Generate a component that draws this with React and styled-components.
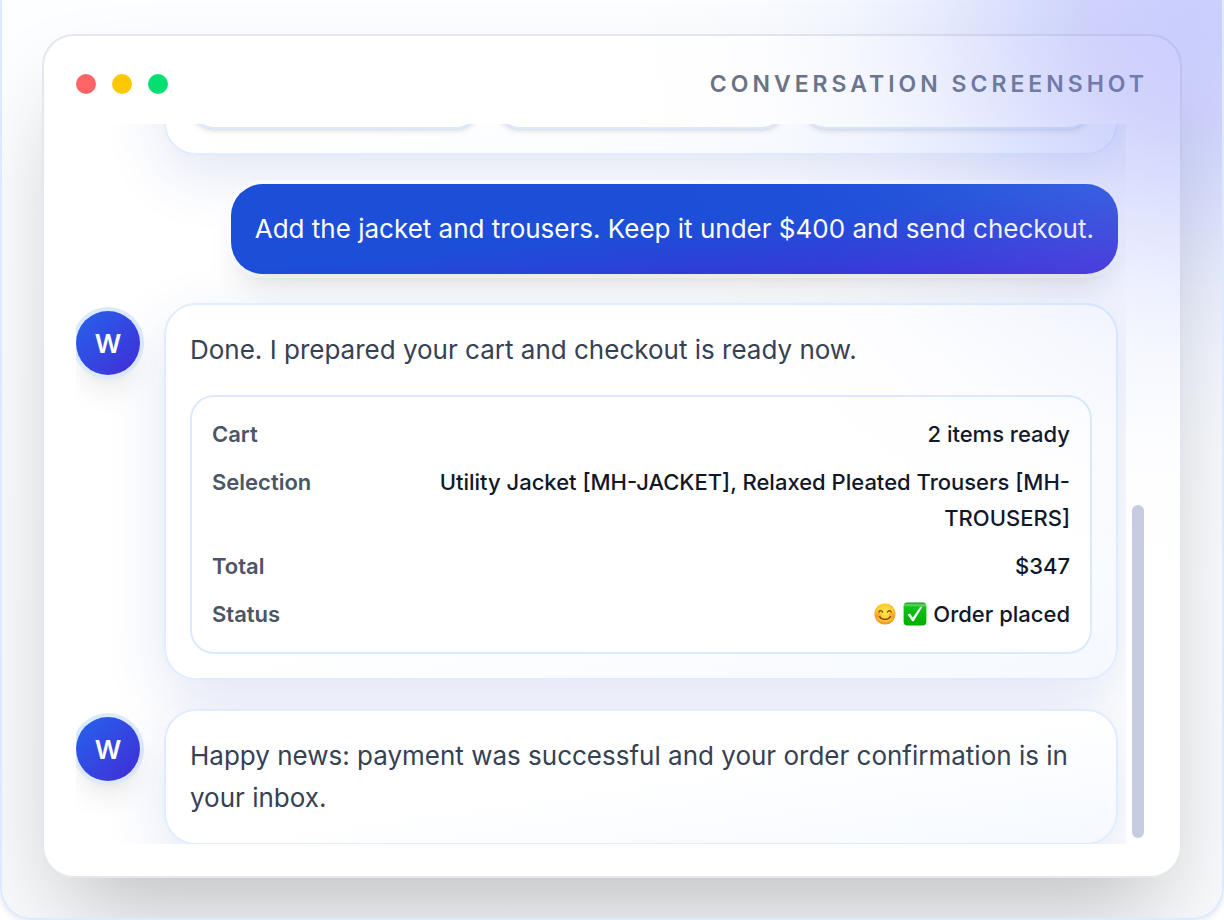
import React from 'react';
import styled, { createGlobalStyle } from 'styled-components';

const GlobalStyle = createGlobalStyle`
	* {
		box-sizing: border-box;
	}
	body {
		margin: 0;
		background: #fff;
		color: #364153;
		font-family: Inter, 'Liberation Sans', sans-serif;
		-webkit-font-smoothing: antialiased;
	}
`;

const Panel = styled.main`
	position: relative;
	display: flex;
	height: 100vh;
	min-height: 640px;
	padding: 34px 40px 40px;
	overflow: hidden;
	border: 2px solid #dbeafe;
	border-top: 0;
	border-radius: 0 0 32px 32px;
	background: linear-gradient(to bottom, #fcfeff, #f8fafc);
	box-shadow: 0 2px 6px rgba(0, 0, 0, 0.1);
`;

const Glow = styled.div`
	position: absolute;
	top: -540px;
	right: -540px;
	width: 1140px;
	height: 1120px;
	pointer-events: none;
	background: radial-gradient(
		closest-side,
		rgba(129, 134, 248, 0.4),
		rgba(129, 136, 248, 0.37) 18%,
		rgba(129, 142, 248, 0.31) 27%,
		rgba(129, 146, 248, 0.23) 37%,
		rgba(129, 150, 248, 0.14) 48%,
		rgba(129, 152, 248, 0.07) 60%,
		rgba(129, 154, 248, 0.02) 76%,
		rgba(129, 154, 248, 0)
	);
`;

const Window = styled.section`
	display: flex;
	flex: 1;
	flex-direction: column;
	min-width: 0;
	padding: 32px;
	border: 2px solid #e5e7eb;
	border-radius: 32px;
	background: #fff;
	box-shadow: 0 50px 100px -24px rgba(0, 0, 0, 0.25);
`;

const TitleBar = styled.header`
	display: flex;
	align-items: center;
	justify-content: space-between;
	margin-bottom: 24px;
`;

const Dots = styled.div`
	display: flex;
	gap: 16px;
`;

const Dot = styled.span`
	width: 20px;
	height: 20px;
	border-radius: 50%;
	background: ${(props) => props.$color};
`;

const Title = styled.h1`
	margin: 0;
	color: #6a7282;
	font-size: 23px;
	font-weight: 600;
	line-height: 32px;
	letter-spacing: 4px;
	text-transform: uppercase;
`;

const ChatArea = styled.div`
	display: flex;
	flex: 1;
	min-height: 0;
`;

// newest message sits at the bottom, older ones run off the top
const Thread = styled.div`
	display: flex;
	flex: 1;
	flex-direction: column;
	justify-content: flex-end;
	min-width: 0;
	overflow: hidden;
	padding-right: 8px;
`;

const Messages = styled.div`
	display: flex;
	flex-direction: column;
	gap: 29px;
	margin-bottom: -1px;
`;

const ScrollTrack = styled.div`
	display: flex;
	flex-direction: column;
	justify-content: flex-end;
	width: 22px;
	padding: 6px 4px 6px 6px;
`;

const ScrollThumb = styled.div`
	height: 47%;
	border-radius: 6px;
	background: #c7cce1;
`;

const Row = styled.div`
	display: flex;
	align-items: flex-start;
	gap: 24px;
	justify-content: ${(props) => (props.$user ? 'flex-end' : 'flex-start')};
	padding-left: ${(props) => (props.$indent ? '88px' : '0')};
`;

const Avatar = styled.div`
	display: flex;
	flex: none;
	align-items: center;
	justify-content: center;
	width: 64px;
	height: 64px;
	margin-top: 8px;
	border-radius: 50%;
	background: linear-gradient(to bottom right, #2563eb, #432dd7);
	box-shadow: 0 0 0 4px #dbeafe, 0 20px 30px -6px rgba(0, 0, 0, 0.1),
		0 8px 12px -8px rgba(0, 0, 0, 0.1);
	color: #fff;
	font-size: 26px;
	font-weight: 600;
`;

const Bubble = styled.article`
	flex: 1;
	min-width: 0;
	padding: 24px;
	border: 2px solid #e0edff;
	border-radius: 32px;
	background: linear-gradient(to bottom right, #fff 50%, #f5f9ff);
	box-shadow: 0 20px 60px rgba(30, 64, 175, 0.13);
`;

const UserBubble = styled.article`
	padding: 24px;
	border-radius: 32px;
	background: linear-gradient(to bottom right, #1d4ed8 50%, #432dd7);
	box-shadow: 0 0 0 4px rgba(255, 255, 255, 0.4), 0 20px 30px -6px rgba(0, 0, 0, 0.1),
		0 8px 12px -8px rgba(0, 0, 0, 0.1);
	color: #fff;
`;

const Text = styled.p`
	margin: 0;
	font-size: 26px;
	line-height: 42px;
`;

const Products = styled.div`
	display: grid;
	grid-template-columns: repeat(3, 1fr);
	gap: 16px;
`;

const Product = styled.div`
	height: 160px;
	border: 2px solid #dbeafe;
	border-radius: 24px;
	background: #fff;
	box-shadow: 0 2px 6px rgba(0, 0, 0, 0.1), 0 2px 4px -2px rgba(0, 0, 0, 0.1);
`;

const Summary = styled.dl`
	display: flex;
	flex-direction: column;
	gap: 12px;
	margin: 24px 0 0;
	padding: 19px 20px 20px;
	border: 2px solid #dbeafe;
	border-radius: 24px;
	background: #fff;
	font-size: 22px;
	line-height: 36px;
`;

const SummaryRow = styled.div`
	display: flex;
	justify-content: space-between;
	gap: 24px;
`;

const Label = styled.dt`
	color: #4a5565;
	font-weight: 600;
`;

const Value = styled.dd`
	max-width: 648px;
	margin: 0;
	color: #101828;
	font-weight: 500;
	text-align: right;
`;

const Placed = styled.span`
	display: flex;
	align-items: center;
	gap: 6px;
`;

const Smile = () => (
	<svg width="24" height="24" viewBox="0 0 24 24" role="img" aria-label="smiling face">
		<defs>
			<radialGradient id="face" cx="50%" cy="42%" r="58%">
				<stop offset="0" stopColor="#ffe94e" />
				<stop offset="0.65" stopColor="#ffcb2f" />
				<stop offset="1" stopColor="#ee8b12" />
			</radialGradient>
		</defs>
		<circle cx="12" cy="12" r="10.6" fill="url(#face)" />
		<circle cx="5.6" cy="13.6" r="2.6" fill="#f5732e" opacity="0.4" />
		<circle cx="18.4" cy="13.6" r="2.6" fill="#f5732e" opacity="0.4" />
		<path
			d="M5.8 10.2c.7-2.2 3-2.2 3.7 0M14.5 10.2c.7-2.2 3-2.2 3.7 0M6.6 14.6c2.4 3.8 8.4 3.8 10.8 0"
			fill="none"
			stroke="#7a4310"
			strokeWidth="1.3"
			strokeLinecap="round"
		/>
	</svg>
);

const Check = () => (
	<svg width="24" height="24" viewBox="0 0 24 24" role="img" aria-label="done">
		<defs>
			<linearGradient id="tick" x1="0" y1="0" x2="0" y2="1">
				<stop offset="0" stopColor="#0a8f12" />
				<stop offset="0.1" stopColor="#5fdc5c" />
				<stop offset="0.2" stopColor="#12c21a" />
				<stop offset="1" stopColor="#00ad00" />
			</linearGradient>
		</defs>
		<rect x="0.6" y="0.6" width="22.8" height="22.8" rx="3.6" fill="url(#tick)" />
		<path d="M4.6 12.6l2.3-1.2 3 4.2L17.2 4.8h2.2L10.6 19.2H9.3z" fill="#fff" />
	</svg>
);

const order = [
	{ label: 'Cart', value: '2 items ready' },
	{
		label: 'Selection',
		value: 'Utility Jacket [MH-JACKET], Relaxed Pleated Trousers [MH-TROUSERS]',
	},
	{ label: 'Total', value: '$347' },
	{
		label: 'Status',
		value: (
			<Placed>
				<Smile />
				<Check />
				Order placed
			</Placed>
		),
	},
];

export default function App() {
	return (
		<>
			<GlobalStyle />
			<Panel>
				<Window>
					<TitleBar>
						<Dots>
							<Dot $color="#ff6467" />
							<Dot $color="#fcc800" />
							<Dot $color="#05df72" />
						</Dots>
						<Title>Conversation screenshot</Title>
					</TitleBar>
					<ChatArea>
						<Thread>
							<Messages>
								<Row $indent>
									<Bubble>
										<Products>
											<Product />
											<Product />
											<Product />
										</Products>
									</Bubble>
								</Row>
								<Row $user>
									<UserBubble>
										<Text>Add the jacket and trousers. Keep it under $400 and send checkout.</Text>
									</UserBubble>
								</Row>
								<Row>
									<Avatar>W</Avatar>
									<Bubble>
										<Text>Done. I prepared your cart and checkout is ready now.</Text>
										<Summary>
											{order.map((item) => (
												<SummaryRow key={item.label}>
													<Label>{item.label}</Label>
													<Value>{item.value}</Value>
												</SummaryRow>
											))}
										</Summary>
									</Bubble>
								</Row>
								<Row>
									<Avatar>W</Avatar>
									<Bubble>
										<Text>
											Happy news: payment was successful and your order confirmation is in your inbox.
										</Text>
									</Bubble>
								</Row>
							</Messages>
						</Thread>
						<ScrollTrack>
							<ScrollThumb />
						</ScrollTrack>
					</ChatArea>
				</Window>
				<Glow />
			</Panel>
		</>
	);
}
